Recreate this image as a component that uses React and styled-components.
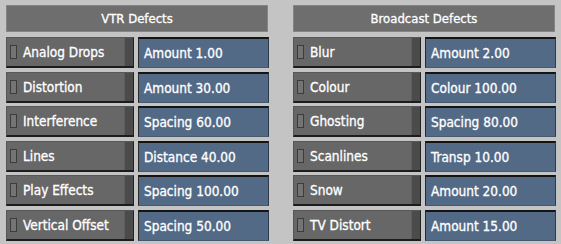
import React from "react";
import styled, { createGlobalStyle } from "styled-components";

const GlobalStyle = createGlobalStyle`
  html, body {
    margin: 0;
    padding: 0;
    background: #c4c4c4;
  }
  body {
    font-family: "DejaVu Sans Condensed", "DejaVu Sans", "Liberation Sans", sans-serif;
  }
`;

const panels = [
  {
    title: "VTR Defects",
    rows: [
      ["Analog Drops", "Amount 1.00"],
      ["Distortion", "Amount 30.00"],
      ["Interference", "Spacing 60.00"],
      ["Lines", "Distance 40.00"],
      ["Play Effects", "Spacing 100.00"],
      ["Vertical Offset", "Spacing 50.00"],
    ],
  },
  {
    title: "Broadcast Defects",
    rows: [
      ["Blur", "Amount 2.00"],
      ["Colour", "Colour 100.00"],
      ["Ghosting", "Spacing 80.00"],
      ["Scanlines", "Transp 10.00"],
      ["Snow", "Amount 20.00"],
      ["TV Distort", "Amount 15.00"],
    ],
  },
];

const App = () => {
  return (
    <Page>
      <GlobalStyle />
      {panels.map((panel) => (
        <Panel key={panel.title}>
          <Header>{panel.title}</Header>
          <Rows>
            {panel.rows.map(([label, value]) => (
              <Row key={label}>
                <ToggleButton>
                  <Led />
                  <Label>{label}</Label>
                  <Grip />
                </ToggleButton>
                <ValueField>{value}</ValueField>
              </Row>
            ))}
          </Rows>
        </Panel>
      ))}
    </Page>
  );
};
export default App;

const Page = styled.div`
  display: flex;
  gap: 24px;
  padding: 5px 0 0 6px;
  width: 561px;
  height: 244px;
  box-sizing: border-box;
`;

const Panel = styled.div`
  width: 263px;
  display: flex;
  flex-direction: column;
  gap: 5px;
`;

const Header = styled.div`
  height: 27px;
  width: 262px;
  box-sizing: border-box;
  background: #6e6e6e;
  border: 1px solid #858585;
  color: #ffffff;
  font-size: 13px;
  -webkit-text-stroke: 0.3px #fff;
  display: flex;
  align-items: center;
  justify-content: center;
`;

const Rows = styled.div`
  display: grid;
  grid-template-rows: repeat(6, 31px);
  row-gap: 3.5px;
`;

const Row = styled.div`
  display: grid;
  grid-template-columns: 128px 131px;
  column-gap: 4px;
`;

const ToggleButton = styled.div`
  display: flex;
  align-items: center;
  box-sizing: border-box;
  background: #676767;
  border-top: 1px solid #575757;
  border-left: 1px solid #565656;
  border-right: 1px solid #222;
  border-bottom: 2px solid #1c1c1c;
  padding-left: 3px;
  color: #fff;
  font-size: 13.5px;
  -webkit-text-stroke: 0.3px #fff;
`;

const Led = styled.span`
  width: 7px;
  height: 14px;
  box-sizing: border-box;
  border: 1px solid #3c3c3c;
  background: #747474;
  flex-shrink: 0;
`;

const Label = styled.span`
  margin-left: 6px;
  white-space: nowrap;
  flex: 1;
`;

const Grip = styled.span`
  align-self: stretch;
  width: 8px;
  flex-shrink: 0;
  background: #4b4b4b;
  border-left: 1px solid #5e5e5e;
`;

const ValueField = styled.div`
  display: flex;
  align-items: center;
  box-sizing: border-box;
  background: #536a87;
  border-top: 2px solid #141414;
  border-left: 1px solid #2a2a2a;
  border-right: 1px solid #2e3a48;
  border-bottom: 1px solid #46596f;
  padding-left: 5px;
  color: #fff;
  font-size: 13.5px;
  -webkit-text-stroke: 0.3px #fff;
  white-space: nowrap;
`;
